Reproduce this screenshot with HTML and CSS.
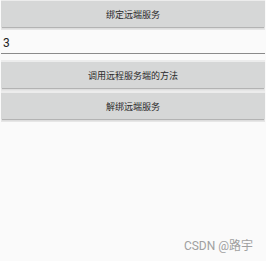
FILE: index.html
```html
<!DOCTYPE html>
<html>
<head>
<meta charset="utf-8">
<link rel="stylesheet" href="styles.css">
</head>
<body>
<div class="screen">
  <div class="btn first">绑定远端服务</div>
  <div class="edit"><span class="val">3</span></div>
  <div class="btn">调用远程服务端的方法</div>
  <div class="btn">解绑远端服务</div>
  <div class="spacer"></div>
  <div class="mark">CSDN @路宇</div>
</div>
</body>
</html>
```
FILE: styles.css
```css
html, body {
  margin: 0;
  padding: 0;
  background: #fafafa;
}
.screen {
  width: 266px;
  height: 261px;
  display: flex;
  flex-direction: column;
  font-family: "Roboto", "Noto Sans CJK SC", sans-serif;
}
.btn {
  flex: none;
  margin: 0 1px 5px 1px;
  height: 26px;
  background: #d6d7d7;
  color: #2a2a2a;
  font-size: 9px;
  display: flex;
  align-items: center;
  justify-content: center;
  box-shadow: 0 2px 1px -1px rgba(0,0,0,0.22), 0 3px 0 0 #e6e6e6, 0 -2px 0 0 #ececec;
}
.btn.first {
  margin-top: 1px;
}
.edit {
  flex: none;
  margin: 0 1px 8px 1px;
  height: 21px;
  border-bottom: 1px solid #8a8a8a;
  display: flex;
  align-items: flex-end;
  padding-left: 2px;
  padding-bottom: 0;
  box-sizing: content-box;
  color: #222;
  font-size: 12px;
  line-height: 16px;
}
.val {
  margin-bottom: 2px;
}
.spacer { flex: 1; }
.mark {
  flex: none;
  align-self: flex-end;
  margin: 0 13px 8px 0;
  font-size: 12px;
  line-height: 14px;
  color: #a0a0a0;
}
```
